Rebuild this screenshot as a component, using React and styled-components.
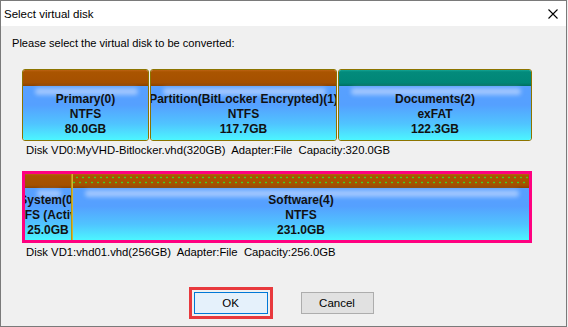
import React from "react";
import styled, { createGlobalStyle, css } from "styled-components";

const GlobalStyle = createGlobalStyle`
  html, body { margin: 0; padding: 0; background: #f0f0f0; }
  body { font-family: "Liberation Sans", Arial, sans-serif; }
  * { box-sizing: border-box; }
`;

const Window = styled.div`
  width: 567px;
  height: 327px;
  border: 1px solid #7a7a7a;
  background: #f0f0f0;
  display: flex;
  flex-direction: column;
`;

const TitleBar = styled.div`
  height: 25px;
  flex: none;
  background: #ffffff;
  display: flex;
  align-items: center;
  justify-content: space-between;
  padding: 0 8px 0 3px;
  font-size: 11.5px;
  color: #000;
`;

const CloseIcon = styled.svg`
  width: 10px;
  height: 10px;
  display: block;
`;

const Body = styled.div`
  flex: 1;
  display: flex;
  flex-direction: column;
  padding: 10px 0 0 11px;
`;

const Instruction = styled.div`
  font-size: 11.1px;
  line-height: 14px;
  color: #000;
`;

const DiskGroup = styled.div`
  display: flex;
  flex-direction: column;
  margin-top: ${(p) => p.$top}px;
`;

const DiskRow = styled.div`
  display: flex;
  gap: ${(p) => (p.$selected ? 0 : 1)}px;
  margin-left: 10px;
  width: 510px;
  height: 72px;
  ${(p) =>
    p.$selected &&
    css`
      border: 3px solid #ff0080;
    `}
`;

const Partition = styled.div`
  flex: none;
  display: flex;
  flex-direction: column;
  overflow: hidden;
  ${(p) =>
    !p.$selected &&
    css`
      border: 1px solid #8c7400;
      border-radius: 3px;
    `}
`;

const headerBg = {
  brown: "linear-gradient(#bb6212 0, #aa5500 12%, #a45000 80%, #8a4300 100%)",
  teal: "linear-gradient(#14a494 0, #038b7c 12%, #008676 80%, #006e60 100%)",
};

const dots = css`
  background:
    radial-gradient(circle, #45d025 0 0.7px, transparent 1.2px) 1px 1px / 6px 5px repeat-x,
    radial-gradient(circle, #45d025 0 0.7px, transparent 1.2px) 4px 6px / 6px 5px repeat-x,
    ${headerBg.brown};
`;

const PartHeader = styled.div`
  flex: none;
  height: ${(p) => p.$h}px;
  background: ${(p) => headerBg[p.$color]};
  ${(p) => p.$dotted && dots}
`;

const PartBody = styled.div`
  position: relative;
  flex: 1;
  display: flex;
  flex-direction: column;
  align-items: center;
  justify-content: center;
  background: linear-gradient(
    to bottom,
    #58a0ff 0%,
    #55a0ff 35%,
    #50c4ff 70%,
    #4cf6ff 100%
  );
  font-weight: bold;
  font-size: 12px;
  line-height: 15px;
  color: #111;
  white-space: nowrap;
  padding-top: 2px;

  &::before {
    content: "";
    position: absolute;
    left: 12px;
    right: 10px;
    top: 2px;
    height: 7px;
    border-radius: 4px;
    background: rgba(210, 225, 255, 0.6);
    filter: blur(2px);
  }
`;

const PartLine = styled.span`
  position: relative;
`;

const Divider = styled.div`
  flex: none;
  width: 2px;
  background: linear-gradient(to right, #a88a00, #e0c040);
`;

const DiskLabel = styled.div`
  margin: 2px 0 0 14px;
  font-size: 11.3px;
  line-height: 14px;
  white-space: pre;
  color: #000;
`;

const ButtonRow = styled.div`
  display: flex;
  justify-content: center;
  gap: 33px;
  margin-top: 33px;
  padding-right: 11px;
`;

const Button = styled.button`
  width: ${(p) => p.$w}px;
  height: 22px;
  font-family: "Liberation Sans", Arial, sans-serif;
  font-size: 11.5px;
  color: #000;
  padding: 0;
  border: 1px solid ${(p) => (p.$default ? "#0078d7" : "#adadad")};
  background: ${(p) => (p.$default ? "#e5f1fb" : "#e1e1e1")};
  ${(p) =>
    p.$focused &&
    css`
      outline: 3px solid #e8393d;
      outline-offset: 2px;
    `}
`;

const disks = [
  {
    label: "Disk VD0:MyVHD-Bitlocker.vhd(320GB)  Adapter:File  Capacity:320.0GB",
    selected: false,
    top: 19,
    parts: [
      { name: "Primary(0)", fs: "NTFS", size: "80.0GB", width: 127, color: "brown" },
      { name: "Partition(BitLocker Encrypted)(1)", fs: "NTFS", size: "117.7GB", width: 187, color: "brown" },
      { name: "Documents(2)", fs: "exFAT", size: "122.3GB", width: 194, color: "teal" },
    ],
  },
  {
    label: "Disk VD1:vhd01.vhd(256GB)  Adapter:File  Capacity:256.0GB",
    selected: true,
    top: 14,
    parts: [
      { name: "System(0)", fs: "NTFS (Active)", size: "25.0GB", width: 46, color: "brown" },
      { name: "Software(4)", fs: "NTFS", size: "231.0GB", width: 456, color: "brown", dotted: true },
    ],
  },
];

export default function App() {
  return (
    <>
      <GlobalStyle />
      <Window>
        <TitleBar>
          <span>Select virtual disk</span>
          <CloseIcon viewBox="0 0 10 10">
            <path d="M0.5 0.5 L9.5 9.5 M9.5 0.5 L0.5 9.5" stroke="#000" strokeWidth="1.1" fill="none" />
          </CloseIcon>
        </TitleBar>
        <Body>
          <Instruction>Please select the virtual disk to be converted:</Instruction>
          {disks.map((d) => (
            <DiskGroup key={d.label} $top={d.top}>
              <DiskRow $selected={d.selected}>
                {d.parts.map((p, i) => (
                  <React.Fragment key={p.name}>
                    {d.selected && i > 0 && <Divider />}
                    <Partition $selected={d.selected} style={{ width: p.width }}>
                      <PartHeader $color={p.color} $h={d.selected ? 14 : 16} $dotted={p.dotted} />
                      <PartBody>
                        <PartLine>{p.name}</PartLine>
                        <PartLine>{p.fs}</PartLine>
                        <PartLine>{p.size}</PartLine>
                      </PartBody>
                    </Partition>
                  </React.Fragment>
                ))}
              </DiskRow>
              <DiskLabel>{d.label}</DiskLabel>
            </DiskGroup>
          ))}
          <ButtonRow>
            <Button $w={74} $default $focused>OK</Button>
            <Button $w={73}>Cancel</Button>
          </ButtonRow>
        </Body>
      </Window>
    </>
  );
}
